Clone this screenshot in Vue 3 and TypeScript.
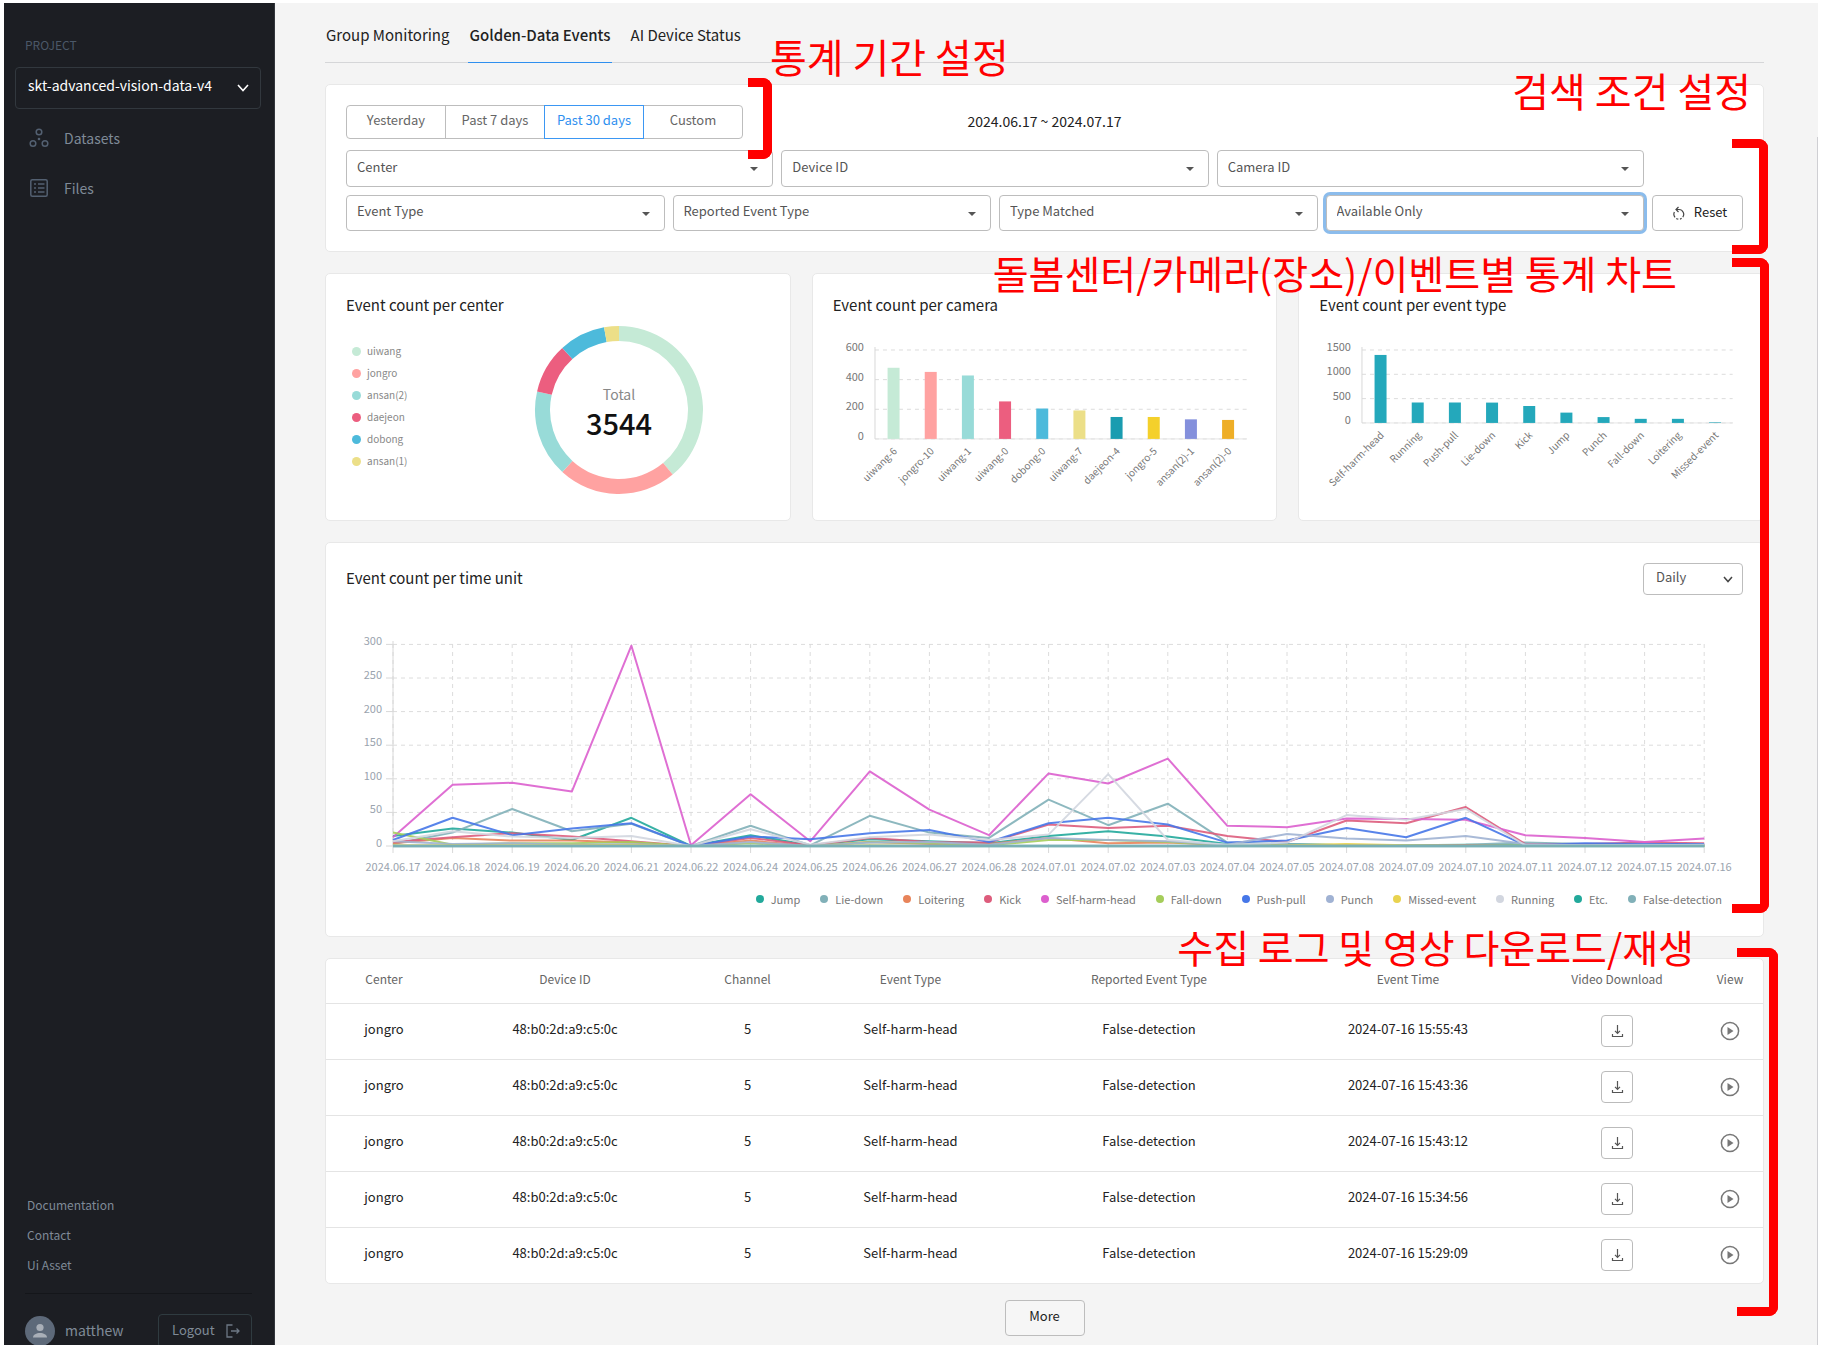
<script setup lang="ts">
import { ref } from 'vue'

interface Slice { name: string; value: number; color: string }
interface Bar { name: string; value: number; color: string }
interface Series { name: string; color: string; values: number[] }

const tabs = ['Group Monitoring', 'Golden-Data Events', 'AI Device Status']
const activeTab = ref('Golden-Data Events')
const periods = ['Yesterday', 'Past 7 days', 'Past 30 days', 'Custom']
const activePeriod = ref('Past 30 days')
const primaryFilters = ['Center', 'Device ID', 'Camera ID']
const secondaryFilters = ['Event Type', 'Reported Event Type', 'Type Matched', 'Available Only']

const centers: Slice[] = [
  { name: 'uiwang', value: 1381, color: '#c5ead6' },
  { name: 'jongro', value: 809, color: '#ffa2a1' },
  { name: 'ansan(2)', value: 594, color: '#98dbd8' },
  { name: 'daejeon', value: 342, color: '#ec5e7f' },
  { name: 'dobong', value: 317, color: '#4dbadb' },
  { name: 'ansan(1)', value: 101, color: '#ecdf88' },
]
const total = centers.reduce((sum, c) => sum + c.value, 0)

function point(r: number, share: number): string {
  const a = share * 2 * Math.PI
  return `${85 + r * Math.sin(a)} ${85 - r * Math.cos(a)}`
}
let run = 0
const arcs = centers.map((c) => {
  const from = run / total
  run += c.value
  const to = run / total
  const large = to - from > 0.5 ? 1 : 0
  return {
    color: c.color,
    d: `M${point(84, from)} A84 84 0 ${large} 1 ${point(84, to)} L${point(69, to)} A69 69 0 ${large} 0 ${point(69, from)} Z`,
  }
})

const teal = '#24a8bb'
const barCharts = [
  {
    title: 'Event count per camera', max: 600, ticks: [0, 200, 400, 600], base: 109, axis: 42,
    bars: [
      { name: 'uiwang-6', value: 480, color: '#c5ead6' },
      { name: 'jongro-10', value: 452, color: '#ffa2a1' },
      { name: 'uiwang-1', value: 428, color: '#98dbd8' },
      { name: 'uiwang-0', value: 253, color: '#ec5e7f' },
      { name: 'dobong-0', value: 205, color: '#4dbadb' },
      { name: 'uiwang-7', value: 192, color: '#ecdf88' },
      { name: 'daejeon-4', value: 148, color: '#1a9cb0' },
      { name: 'jongro-5', value: 148, color: '#f4d02b' },
      { name: 'ansan(2)-1', value: 132, color: '#8490dc' },
      { name: 'ansan(2)-0', value: 128, color: '#eeae27' },
    ] as Bar[],
  },
  {
    title: 'Event count per event type', max: 1500, ticks: [0, 500, 1000, 1500], base: 93, axis: 43,
    bars: [
      { name: 'Self-harm-head', value: 1398, color: teal },
      { name: 'Running', value: 420, color: teal },
      { name: 'Push-pull', value: 420, color: teal },
      { name: 'Lie-down', value: 418, color: teal },
      { name: 'Kick', value: 348, color: teal },
      { name: 'Jump', value: 212, color: teal },
      { name: 'Punch', value: 120, color: teal },
      { name: 'Fall-down', value: 84, color: teal },
      { name: 'Loitering', value: 84, color: teal },
      { name: 'Missed-event', value: 12, color: teal },
    ] as Bar[],
  },
]
const barTop = 20
const barY = (v: number, max: number, base: number) => base - (v / max) * (base - barTop)
const barX = (i: number, axis: number) => axis + 18.6 + i * 37.2

const days = [
  '06.17', '06.18', '06.19', '06.20', '06.21', '06.22', '06.24', '06.25', '06.26', '06.27', '06.28', '07.01',
  '07.02', '07.03', '07.04', '07.05', '07.08', '07.09', '07.10', '07.11', '07.12', '07.15', '07.16',
]
const series: Series[] = [
  { name: 'Jump', color: '#22a99b', values: [15, 26, 20, 9, 42, 0, 16, 1, 10, 7, 4, 15, 22, 14, 3, 3, 1, 1, 2, 1, 0, 1, 0] },
  { name: 'Lie-down', color: '#81b0b8', values: [3, 20, 55, 22, 33, 0, 30, 1, 45, 20, 12, 69, 31, 63, 5, 3, 1, 1, 2, 5, 3, 2, 1] },
  { name: 'Loitering', color: '#e8845a', values: [4, 12, 8, 8, 5, 0, 8, 0, 6, 3, 3, 12, 4, 5, 1, 0, 1, 0, 1, 0, 0, 0, 1] },
  { name: 'Kick', color: '#dd5c7c', values: [6, 13, 19, 14, 7, 0, 12, 1, 12, 6, 5, 32, 27, 30, 15, 6, 38, 34, 58, 3, 3, 5, 4] },
  { name: 'Self-harm-head', color: '#dc5fce', values: [13, 91, 94, 81, 298, 1, 77, 7, 111, 54, 16, 108, 93, 130, 30, 28, 41, 40, 39, 16, 12, 6, 11] },
  { name: 'Fall-down', color: '#a5cd5a', values: [20, 2, 4, 4, 6, 0, 4, 0, 6, 4, 1, 9, 9, 6, 1, 0, 0, 0, 0, 1, 0, 0, 0] },
  { name: 'Push-pull', color: '#4677e8', values: [9, 42, 16, 26, 34, 0, 14, 10, 19, 24, 6, 34, 42, 32, 5, 8, 27, 13, 42, 1, 4, 3, 3] },
  { name: 'Punch', color: '#a0b2d3', values: [7, 3, 4, 2, 3, 0, 6, 0, 5, 6, 2, 12, 9, 7, 2, 18, 11, 8, 15, 3, 1, 2, 1] },
  { name: 'Missed-event', color: '#e9d34f', values: [1, 1, 1, 1, 2, 0, 0, 0, 1, 0, 0, 0, 0, 0, 0, 1, 3, 1, 0, 0, 0, 0, 0] },
  { name: 'Running', color: '#d2d6df', values: [7, 22, 14, 12, 15, 0, 25, 2, 13, 17, 9, 17, 107, 9, 2, 5, 46, 39, 55, 1, 1, 1, 2] },
  { name: 'Etc.', color: '#22a99b', values: days.map(() => 0) },
  { name: 'False-detection', color: '#81b0b8', values: days.map(() => 0) },
]
const lineTicks = [0, 50, 100, 150, 200, 250, 300]
const lx = (i: number) => 47 + i * 59.6
const ly = (v: number) => 216 - (v / 300) * 201.6
const path = (s: Series) => s.values.map((v, i) => `${lx(i).toFixed(1)},${ly(v).toFixed(1)}`).join(' ')

const columns = ['Center', 'Device ID', 'Channel', 'Event Type', 'Reported Event Type', 'Event Time', 'Video Download', 'View']
const rows = ['15:55:43', '15:43:36', '15:43:12', '15:34:56', '15:29:09'].map((t) => ({
  center: 'jongro', device: '48:b0:2d:a9:c5:0c', channel: 5, type: 'Self-harm-head', reported: 'False-detection', time: `2024-07-16 ${t}`,
}))
</script>

<template>
  <div class="shell">
    <aside class="sidebar">
      <label class="project-label" for="project">PROJECT</label>
      <div class="project-box">
        <select id="project" class="project-select"><option>skt-advanced-vision-data-v4</option></select>
        <svg class="chevron" width="12" height="8" viewBox="0 0 12 8"><path d="M1 1l5 5.5L11 1" fill="none" stroke="#fff" stroke-width="1.6" /></svg>
      </div>
      <nav class="side-nav">
        <a href="#datasets">
          <svg width="20" height="20" viewBox="0 0 20 20" fill="none" stroke="#536071" stroke-width="1.5">
            <circle cx="10" cy="4" r="2.8" /><circle cx="4" cy="15.5" r="2.8" /><circle cx="16" cy="15.5" r="2.8" />
            <circle cx="10" cy="11" r="1.3" fill="#536071" stroke="none" />
          </svg>
          Datasets
        </a>
        <a href="#files">
          <svg width="20" height="20" viewBox="0 0 20 20" fill="none" stroke="#536071" stroke-width="1.5">
            <rect x="1.8" y="1.8" width="16.4" height="16.4" rx="1.5" />
            <path d="M5 6h2M5 10h2M5 14h2M9 6h6.500M9 10h6.500M9 14h6.500" />
          </svg>
          Files
        </a>
      </nav>
      <div class="side-foot">
        <a href="#documentation">Documentation</a>
        <a href="#contact">Contact</a>
        <a href="#ui-asset">Ui Asset</a>
        <hr>
        <div class="user">
          <svg width="30" height="30" viewBox="0 0 30 30"><circle cx="15" cy="15" r="15" fill="#5d6979" /><circle cx="15" cy="11.500" r="3.600" fill="#a9afb8" /><path d="M8 21.500c0-6 14-6 14 0z" fill="#a9afb8" /></svg>
          <span class="user-name">matthew</span>
          <button type="button" class="logout">
            <span>Logout</span>
            <svg width="14" height="14" viewBox="0 0 14 14" fill="none" stroke="#6d7885" stroke-width="1.300"><path d="M6.500 1H1v12h5.500M5 7h8M10.500 4.500L13 7l-2.500 2.500" /></svg>
          </button>
        </div>
      </div>
    </aside>

    <main class="main">
      <nav class="tabs">
        <a v-for="t in tabs" :key="t" href="#" :class="{ active: t === activeTab }" @click.prevent="activeTab = t">{{ t }}</a>
      </nav>

      <section class="card filters">
        <div class="period-row">
          <div class="periods">
            <button v-for="p in periods" :key="p" type="button" :class="{ active: p === activePeriod }" @click="activePeriod = p">{{ p }}</button>
          </div>
          <span class="range">2024.06.17 ~ 2024.07.17</span>
        </div>
        <div class="filter-row three">
          <div v-for="f in primaryFilters" :key="f" class="field">
            <select :aria-label="f"><option>{{ f }}</option></select>
            <svg class="caret" width="8" height="4" viewBox="0 0 8 4"><path d="M0 0h8L4 4z" fill="#555" /></svg>
          </div>
        </div>
        <div class="filter-row four">
          <div v-for="f in secondaryFilters" :key="f" class="field" :class="{ focused: f === 'Available Only' }">
            <select :aria-label="f"><option>{{ f }}</option></select>
            <svg class="caret" width="8" height="4" viewBox="0 0 8 4"><path d="M0 0h8L4 4z" fill="#555" /></svg>
          </div>
          <button type="button" class="reset">
            <svg width="13" height="14" viewBox="0 0 13 14" fill="none" stroke="#444" stroke-width="1.200"><path d="M4.500 3.500h2.500a4.800 4.800 0 0 1 3.800 7.600M9.600 12.300a5 5 0 0 1-1.600.8M6.300 13.200a5 5 0 0 1-2-.8M3 11.300a4.800 4.800 0 0 1-.6-5.200M6.500 1L4 3.500 6.500 6" /></svg>
            <span>Reset</span>
          </button>
        </div>
        <p class="note note-period">통계 기간 설정</p>
        <p class="note note-search">검색 조건 설정</p>
        <i class="bracket bracket-period"></i>
        <i class="bracket bracket-search"></i>
      </section>

      <div class="stats">
        <div class="charts">
          <section class="card chart">
            <h2>Event count per center</h2>
            <div class="donut-body">
              <ul class="donut-legend">
                <li v-for="c in centers" :key="c.name"><i :style="{ background: c.color }"></i>{{ c.name }}</li>
              </ul>
              <svg class="donut" width="170" height="170" viewBox="0 0 170 170">
                <path v-for="a in arcs" :key="a.color" :d="a.d" :fill="a.color" />
                <text x="85" y="75" class="donut-label">Total</text>
                <text x="85" y="110" class="donut-total">{{ total }}</text>
              </svg>
            </div>
          </section>
          <section v-for="c in barCharts" :key="c.title" class="card chart">
            <h2>{{ c.title }}</h2>
            <svg class="bars" viewBox="0 0 424 172">
              <line v-for="t in c.ticks" :key="t" :x1="c.axis" x2="414" :y1="barY(t, c.max, c.base)" :y2="barY(t, c.max, c.base)" class="grid-line" />
              <line :x1="c.axis" x2="414" :y1="c.base" :y2="c.base" class="axis faint" />
              <line :x1="c.axis" :x2="c.axis" y1="17" :y2="c.base" class="axis" />
              <text v-for="t in c.ticks" :key="'t' + t" :x="c.axis - 11" :y="barY(t, c.max, c.base) + 1" class="bar-tick">{{ t }}</text>
              <g v-for="(b, i) in c.bars" :key="b.name">
                <rect :x="barX(i, c.axis) - 6" width="12" :y="barY(b.value, c.max, c.base)" :height="c.base - barY(b.value, c.max, c.base)" :fill="b.color" />
                <text class="bar-name" :transform="`translate(${barX(i, c.axis) + 4} ${c.base + 13}) rotate(-45)`">{{ b.name }}</text>
              </g>
            </svg>
          </section>
        </div>

        <section class="card timeline">
          <header>
            <h2>Event count per time unit</h2>
            <div class="unit">
              <select aria-label="Time unit"><option>Daily</option></select>
              <svg class="chevron" width="10" height="7" viewBox="0 0 10 7"><path d="M1 1l4 4.500L9 1" fill="none" stroke="#444" stroke-width="1.500" /></svg>
            </div>
          </header>
          <svg class="lines" viewBox="0 0 1397 250">
            <g v-for="t in lineTicks" :key="t">
              <line x1="47" x2="1358" :y1="ly(t)" :y2="ly(t)" class="grid-line" />
              <line x1="40" x2="47" :y1="ly(t)" :y2="ly(t)" class="axis" />
              <text x="36" :y="ly(t) + 1" class="line-tick">{{ t }}</text>
            </g>
            <g v-for="(d, i) in days" :key="d">
              <line :x1="lx(i)" :x2="lx(i)" y1="14" y2="216" class="grid-line" />
              <line :x1="lx(i)" :x2="lx(i)" y1="216" y2="223" class="axis" />
              <text :x="lx(i)" y="241" class="day">2024.{{ d }}</text>
            </g>
            <line x1="47" x2="47" y1="11" y2="216" class="axis" />
            <polyline v-for="s in series" :key="s.name" :points="path(s)" fill="none" :stroke="s.color" :stroke-width="s.name === 'False-detection' ? 3 : 2" stroke-linejoin="round" opacity="0.9" />
          </svg>
          <ul class="line-legend">
            <li v-for="s in series" :key="s.name"><i :style="{ background: s.color }"></i>{{ s.name }}</li>
          </ul>
        </section>
        <p class="note long note-charts">돌봄센터/카메라(장소)/이벤트별 통계 차트</p>
        <i class="bracket bracket-charts"></i>
      </div>

      <section class="logs">
        <div class="card table-card">
          <table>
            <colgroup><col v-for="n in 8" :key="n" :class="'c' + n"></colgroup>
            <thead><tr><th v-for="c in columns" :key="c" scope="col">{{ c }}</th></tr></thead>
            <tbody>
              <tr v-for="r in rows" :key="r.time">
                <td>{{ r.center }}</td><td>{{ r.device }}</td><td>{{ r.channel }}</td><td>{{ r.type }}</td><td>{{ r.reported }}</td><td>{{ r.time }}</td>
                <td class="action">
                  <button type="button" class="download" aria-label="Download video">
                    <svg width="13" height="14" viewBox="0 0 13 14" fill="none" stroke="#555" stroke-width="1.200"><path d="M6.500 1v8M4 6.800l2.500 2.500L9 6.800M1.500 10v2.500h10V10" /></svg>
                  </button>
                </td>
                <td class="action">
                  <button type="button" class="play" aria-label="View video">
                    <svg width="20" height="20" viewBox="0 0 20 20"><circle cx="10" cy="10" r="8.600" fill="none" stroke="#777" stroke-width="1.500" /><path d="M7.500 6l6 4-6 4z" fill="#777" /></svg>
                  </button>
                </td>
              </tr>
            </tbody>
          </table>
        </div>
        <button type="button" class="more">More</button>
        <p class="note long note-logs">수집 로그 및 영상 다운로드/재생</p>
        <i class="bracket bracket-logs"></i>
      </section>
    </main>
  </div>
</template>

<style>
body { background: #fff; }
</style>

<style scoped>
* { box-sizing: border-box; }
.shell { display: flex; height: calc(100vh - 14px); margin: 3px 11px 0 4px; overflow: hidden; font-family: "Noto Sans CJK KR", "Noto Sans", sans-serif; font-size: 14px; line-height: 20px; color: #222; }
a { color: inherit; text-decoration: none; }
button, select { font: inherit; color: inherit; margin: 0; cursor: pointer; }
select { appearance: none; }
ul, h2, p { margin: 0; padding: 0; }
ul { list-style: none; }
svg { display: block; flex: none; }

.sidebar { width: 271px; flex: none; display: flex; flex-direction: column; padding: 32px 13px 0 11px; background: #1c1e23; border-right: 1px solid #33363c; color: #7f8a97; }
.project-label { padding-left: 10px; font-size: 12px; color: #4b5868; }
.project-box { position: relative; margin-top: 12px; }
.project-select { width: 100%; height: 42px; padding: 0 40px 6px 12px; border: 1px solid #32383e; border-radius: 4px; background: transparent; color: #fff; }
.project-box .chevron { position: absolute; right: 12px; top: 17px; pointer-events: none; }
.side-nav { display: flex; flex-direction: column; margin-top: 4px; }
.side-nav a { display: flex; align-items: center; gap: 15px; height: 50px; padding-left: 14px; }
.side-foot { margin: auto 0 -3px 10px; font-size: 12px; display: flex; flex-direction: column; }
.side-foot a { padding-left: 2px; line-height: 30px; }
.side-foot hr { width: 227px; margin: 13px 0 20px; border: 0; border-top: 1px solid #14161a; }
.user { display: flex; align-items: center; gap: 10px; width: 227px; height: 34px; font-size: 14px; }
.user-name, .logout span, .reset span { padding-bottom: 2px; }
.logout { display: flex; align-items: center; justify-content: space-between; width: 94px; height: 34px; margin-left: auto; padding: 0 11px 0 13px; border: 1px solid #2f3b40; border-radius: 4px; background: transparent; font-size: 13px; }

.main { position: relative; flex: 1; min-width: 0; padding: 0 54px 0 50px; background: #f4f4f4; }
.main::after { content: ""; position: absolute; right: 0; top: 134px; bottom: 0; width: 1px; background: #cfcfd3; }
.tabs { display: flex; gap: 18px; height: 60px; border-bottom: 1px solid #d5d6d8; }
.tabs a { height: 60px; padding: 22px 1px 0; border-bottom: 1px solid transparent; font-size: 15px; }
.tabs .active { border-color: #2e8fef; font-weight: 500; }

.card { border: 1px solid #e8e8e8; border-radius: 5px; background: #fff; }
.filters { position: relative; height: 168px; margin-top: 21px; padding: 20px; }
.period-row { display: grid; grid-template-columns: 1fr auto 1fr; align-items: center; height: 34px; }
.periods { display: flex; }
.periods button { width: 100px; height: 34px; margin-right: -1px; padding: 0 0 4px; border: 1px solid #bdbdbd; background: #fff; color: #666; font-size: 13px; }
.periods button:first-child { border-radius: 4px 0 0 4px; }
.periods button:last-child { border-radius: 0 4px 4px 0; }
.periods .active { position: relative; border-color: #3b97f3; color: #2e8fef; }
.range { padding-bottom: 3px; font-size: 14px; }
.filter-row { display: grid; gap: 8px; }
.three { grid-template-columns: repeat(3, 1fr) 91px; margin-top: 11px; }
.four { grid-template-columns: repeat(4, 1fr) 91px; margin-top: 8px; }
.field { position: relative; }
.field select { display: block; width: 100%; height: 37px; padding: 0 30px 3px 10px; border: 1px solid #bdbdbd; border-radius: 4px; background: #fff; color: #555; font-size: 13px; }
.four .field select { height: 36px; padding-bottom: 5px; }
.field .caret { position: absolute; right: 15px; top: 17px; pointer-events: none; }
.focused select { box-shadow: 0 0 0 3px #8bbcec; }
.reset { display: flex; align-items: center; justify-content: center; gap: 9px; height: 36px; padding: 0 0 0 4px; border: 1px solid #bdbdbd; border-radius: 4px; background: #fff; font-size: 13px; }

.stats { position: relative; margin-top: 21px; }
.charts { display: grid; grid-template-columns: repeat(3, 1fr); gap: 21px; }
.chart { height: 248px; padding: 19px 20px 0; }
h2 { font-size: 15px; line-height: 24px; font-weight: 400; }
.donut-body { display: flex; align-items: flex-start; }
.donut-legend { flex: none; width: 188px; padding: 23px 0 0 6px; font-size: 10px; line-height: 22px; color: #888; }
.donut-legend li { display: flex; align-items: center; gap: 6px; }
.donut-legend i { width: 9px; height: 9px; border-radius: 50%; }
.donut { margin-top: 8px; }
.donut-label { font-size: 14px; fill: #888; text-anchor: middle; }
.donut-total { font-size: 29px; font-weight: 500; fill: #111; text-anchor: middle; }
.bars { width: 100%; margin-top: 13px; overflow: visible; }
.grid-line { stroke: #dcdcdc; stroke-dasharray: 4 4; }
.axis { stroke: #d8d8d8; }
.faint { stroke: #e6e6e6; }
.bar-tick { font-size: 11px; fill: #777; text-anchor: end; }
.bar-name { font-size: 10px; fill: #777; text-anchor: end; }

.timeline { margin-top: 21px; padding: 20px; height: 395px; }
.timeline header { display: flex; justify-content: space-between; align-items: center; height: 32px; }
.timeline h2 { padding-bottom: 2px; }
.unit { position: relative; }
.unit select { display: block; width: 100px; height: 32px; padding: 0 30px 5px 12px; border: 1px solid #bdbdbd; border-radius: 4px; background: #fff; color: #555; font-size: 13px; }
.unit .chevron { position: absolute; right: 10px; top: 13px; pointer-events: none; }
.lines { width: 100%; margin-top: 35px; overflow: visible; }
.line-tick { font-size: 11px; fill: #9aa3ae; text-anchor: end; }
.day { font-size: 11px; fill: #9aa3ae; text-anchor: middle; }
.line-legend { display: flex; justify-content: flex-end; gap: 20px; margin-top: 9px; padding-right: 21px; font-size: 11px; color: #777; }
.line-legend li { display: flex; align-items: center; gap: 7px; }
.line-legend i { width: 8px; height: 8px; border-radius: 50%; }

.logs { position: relative; margin-top: 21px; }
table { width: 100%; table-layout: fixed; border-collapse: collapse; text-align: center; font-size: 13px; }
th { height: 44px; padding: 0 0 4px; font-size: 12px; font-weight: 400; color: #666; }
td { height: 56px; padding: 0 0 5px; border-top: 1px solid #e4e4e4; }
td.action { padding-bottom: 0; }
td:last-child, th:last-child { padding-right: 5px; }
.c1 { width: 116px; } .c2 { width: 246px; } .c3 { width: 119px; } .c4 { width: 207px; } .c5 { width: 270px; } .c6 { width: 248px; } .c7 { width: 170px; } .c8 { width: 61px; }
.download { display: flex; align-items: center; justify-content: center; width: 32px; height: 32px; margin: 0 auto; padding: 0; border: 1px solid #bbb; border-radius: 4px; background: #fff; }
.play { display: block; margin: 0 auto; padding: 0; border: 0; background: none; }
.more { display: block; width: 80px; height: 36px; margin: 16px auto 0; padding: 0 0 5px; border: 1px solid #bdbdbd; border-radius: 4px; background: #f6f6f6; font-size: 13px; }

.note { position: absolute; z-index: 2; font-size: 40px; line-height: 48px; color: #f00; white-space: nowrap; }
.long { font-size: 39px; }
.bracket { position: absolute; z-index: 2; border: 9px solid #f00; border-left: 0; border-radius: 0 9px 9px 0; }
.note-period { left: 444px; top: -53px; }
.note-search { right: 12px; top: -19px; }
.bracket-period { left: 422px; top: -7px; width: 24px; height: 81px; }
.bracket-search { right: -5px; top: 54px; width: 36px; height: 115px; }
.note-charts { right: 87px; top: -25px; }
.bracket-charts { right: -5px; top: -15px; bottom: 24px; width: 37px; }
.note-logs { right: 70px; top: -36px; }
.bracket-logs { right: -14px; top: -10px; width: 41px; bottom: 20px; }
</style>
